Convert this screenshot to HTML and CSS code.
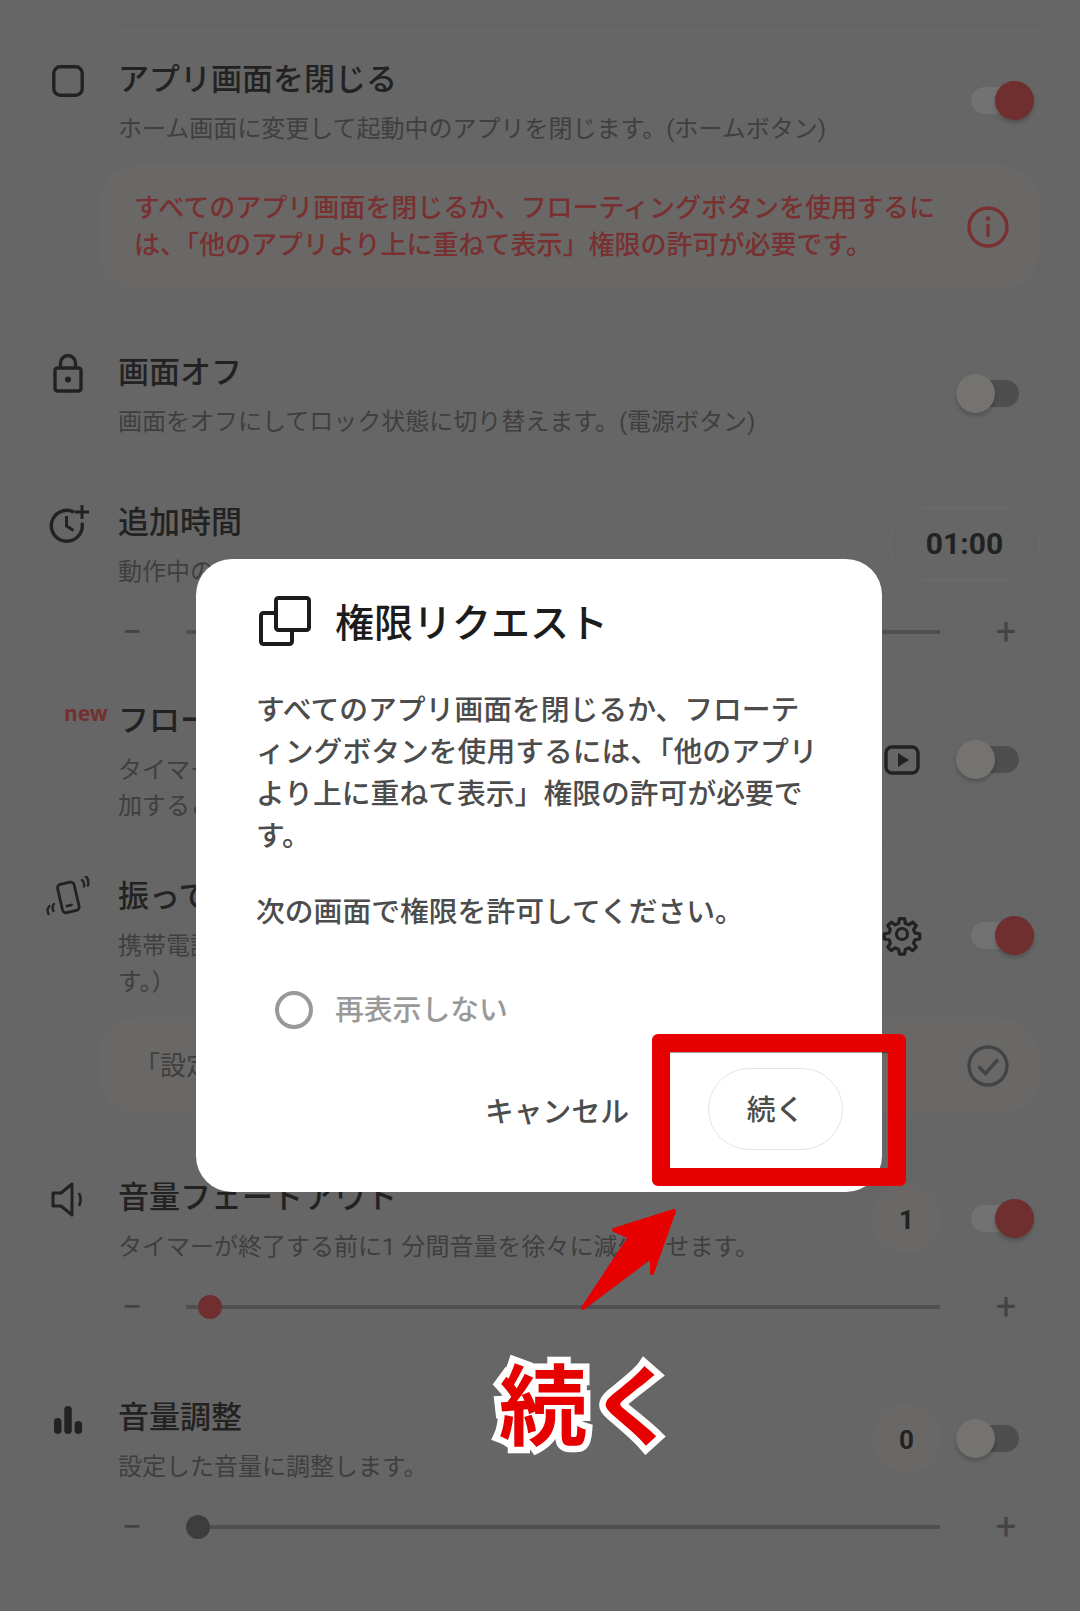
FILE: index.html
```html
<!DOCTYPE html>
<html lang="ja">
<head>
  <meta charset="UTF-8">
  <meta name="viewport" content="width=device-width, initial-scale=1.0">
  <title>権限リクエスト</title>
  <link rel="stylesheet" href="styles.css">
</head>
<body>
  <div class="page">
    <hr class="divider">

    <section class="row with-card">
      <div class="head">
        <svg class="icon" viewBox="0 0 44 44"><rect x="7.8" y="7.8" width="28.4" height="28.4" rx="6.5" fill="none" stroke="#222" stroke-width="3.4"/></svg>
        <div class="text">
          <div class="title">アプリ画面を閉じる</div>
          <div class="sub">ホーム画面に変更して起動中のアプリを閉じます。(ホームボタン)</div>
        </div>
        <div class="controls"><span class="toggle on"><i></i></span></div>
      </div>
      <div class="card red">
        <p>すべてのアプリ画面を閉じるか、フローティングボタンを使用するには、「他のアプリより上に重ねて表示」権限の許可が必要です。</p>
        <svg class="card-icon" viewBox="0 0 44 44"><circle cx="22" cy="22" r="19" fill="none" stroke="#783030" stroke-width="3.4"/><circle cx="22" cy="13.5" r="2.2" fill="#783030"/><rect x="20.4" y="19" width="3.2" height="13" fill="#783030"/></svg>
      </div>
    </section>
    <hr class="divider">

    <section class="row">
      <div class="head">
        <svg class="icon" viewBox="0 0 44 44"><rect x="9" y="16" width="26" height="23" rx="2.5" fill="none" stroke="#222" stroke-width="3.4"/><path d="M14.5 16v-5a7.5 7.5 0 0 1 15 0v5" fill="none" stroke="#222" stroke-width="3.4"/><circle cx="22" cy="27.5" r="3" fill="#222"/></svg>
        <div class="text">
          <div class="title">画面オフ</div>
          <div class="sub">画面をオフにしてロック状態に切り替えます。(電源ボタン)</div>
        </div>
        <div class="controls"><span class="toggle"><i></i></span></div>
      </div>
    </section>
    <hr class="divider">

    <section class="row no-line">
      <div class="head">
        <svg class="icon" viewBox="0 0 44 44"><path d="M27 9.6A15.5 15.5 0 1 0 36.2 22" fill="none" stroke="#222" stroke-width="3.4" stroke-linecap="round"/><path d="M20.5 14v10l7 4.5" fill="none" stroke="#222" stroke-width="3"/><path d="M36 3v14M29 10h14" fill="none" stroke="#222" stroke-width="3"/></svg>
        <div class="text">
          <div class="title">追加時間</div>
          <div class="sub">動作中のタイマーに時間を追加します。</div>
        </div>
        <div class="controls"><span class="pill">01:00</span></div>
      </div>
      <div class="slider">
        <span class="step">−</span>
        <div class="track"></div>
        <span class="step">+</span>
      </div>
    </section>

    <section class="row tight">
      <div class="head">
        <span class="new">new</span>
        <div class="icon-gap"></div>
        <div class="text">
          <div class="title">フローティングボタン</div>
          <div class="sub">タイマーが動作中にボタンで時間を追<br>加することができます。</div>
        </div>
        <div class="controls">
          <svg class="side-icon" viewBox="0 0 44 44"><rect x="6" y="9" width="32" height="26" rx="6" fill="none" stroke="#222" stroke-width="3.4"/><path d="M18 15l11 7-11 7z" fill="#222"/></svg>
          <span class="toggle"><i></i></span>
        </div>
      </div>
    </section>
    <hr class="divider">

    <section class="row with-card">
      <div class="head">
        <svg class="icon" viewBox="0 0 44 44"><g fill="none" stroke="#222" stroke-width="2.8" stroke-linecap="round"><rect x="14" y="7" width="17" height="29" rx="3.5" transform="rotate(-13 22 22)"/><path d="M21 30l4.5-1"/><path d="M36 4c2 1.500 2.500 3.500 2 6.500M39.500 0c2.500 2 3.500 5 2.500 9.500" stroke-width="2.400"/><path d="M8 28c-1.500 1.500-2 4-.5 7M3.500 30c-2 2-3 4-1 8" stroke-width="2.400"/></g></svg>
        <div class="text">
          <div class="title">振って追加</div>
          <div class="sub">携帯電話を振ると時間が追加されま<br>す。）</div>
        </div>
        <div class="controls">
          <svg class="side-icon gear" viewBox="0 0 44 44"><path d="M19 4h6l1 5.500 4 1.700 4.600-3.200 4.200 4.200-3.200 4.600 1.700 4 5.500 1v6l-5.500 1-1.700 4 3.200 4.600-4.200 4.200-4.600-3.200-4 1.700-1 5.500h-6l-1-5.500-4-1.700-4.600 3.200-4.200-4.200 3.200-4.600-1.700-4-5.500-1v-6l5.500-1 1.700-4-3.200-4.600 4.200-4.200 4.600 3.200 4-1.700z" transform="translate(3.300 3.300) scale(.85)" fill="none" stroke="#222" stroke-width="3.800" stroke-linejoin="round"/><circle cx="22" cy="22" r="5.500" fill="none" stroke="#222" stroke-width="3.200"/></svg>
          <span class="toggle on"><i></i></span>
        </div>
      </div>
      <div class="card short">
        <p>「設定」で権限が許可されています。</p>
        <svg class="card-icon" viewBox="0 0 44 44"><circle cx="22" cy="22" r="19" fill="none" stroke="#444" stroke-width="3.4"/><path d="M12.500 22.500l7 7L32 15.500" fill="none" stroke="#444" stroke-width="3.400"/></svg>
      </div>
    </section>
    <hr class="divider">

    <section class="row with-slider">
      <div class="head">
        <svg class="icon" viewBox="0 0 44 44"><path d="M7 16h8l11-9v31l-11-9H7z" fill="none" stroke="#222" stroke-width="3" stroke-linejoin="round"/><path d="M33 16c2 4 2 9 0 13" fill="none" stroke="#222" stroke-width="2.600"/></svg>
        <div class="text">
          <div class="title">音量フェードアウト</div>
          <div class="sub">タイマーが終了する前に1 分間音量を徐々に減少させます。</div>
        </div>
        <div class="controls"><span class="badge">1</span><span class="toggle on"><i></i></span></div>
      </div>
      <div class="slider">
        <span class="step">−</span>
        <div class="track"><i class="knob red-knob"></i></div>
        <span class="step">+</span>
      </div>
    </section>
    <hr class="divider">

    <section class="row with-slider">
      <div class="head">
        <svg class="icon" viewBox="0 0 44 44"><g fill="#222"><rect x="8" y="21" width="7.500" height="16" rx="3.700"/><rect x="18.300" y="9" width="7.500" height="28" rx="3.700"/><rect x="28.600" y="24" width="7.500" height="13" rx="3.700"/></g></svg>
        <div class="text">
          <div class="title">音量調整</div>
          <div class="sub">設定した音量に調整します。</div>
        </div>
        <div class="controls"><span class="badge">0</span><span class="toggle"><i></i></span></div>
      </div>
      <div class="slider">
        <span class="step">−</span>
        <div class="track"><i class="knob"></i></div>
        <span class="step">+</span>
      </div>
    </section>
    <hr class="divider">
  </div>

  <div class="dialog">
    <div class="dialog-head">
      <svg class="dialog-icon" viewBox="0 0 52 52"><path d="M17 18H4.500a2.500 2.500 0 0 0-2.500 2.500v26A2.500 2.500 0 0 0 4.500 49h26a2.500 2.500 0 0 0 2.500-2.500V35" fill="none" stroke="#1c1c1c" stroke-width="4"/><rect x="17" y="3" width="33" height="32" rx="2.500" fill="none" stroke="#1c1c1c" stroke-width="4"/></svg>
      <h2>権限リクエスト</h2>
    </div>
    <p class="dialog-text">すべてのアプリ画面を閉じるか、フローティングボタンを使用するには、「他のアプリより上に重ねて表示」権限の許可が必要です。</p>
    <p class="dialog-text next">次の画面で権限を許可してください。</p>
    <div class="check"><span class="radio"></span>再表示しない</div>
    <div class="actions">
      <span class="cancel">キャンセル</span>
      <span class="ok">続く</span>
    </div>
  </div>

  <div class="mark-box"></div>
  <svg class="mark-arrow" viewBox="0 0 120 130"><path d="M104 11L44 30L60 37L13 108L82 56L82 73Z" fill="#e60000" stroke="#e60000" stroke-width="4" stroke-linejoin="round"/></svg>
  <div class="mark-label">続く</div>
</body>
</html>
```

FILE: styles.css
```css
* { box-sizing: border-box; }
html, body { margin: 0; padding: 0; }
body { width: 1080px; height: 1611px; background: #666; color: #222; font-family: Roboto, "Noto Sans CJK JP", sans-serif; overflow: hidden; position: relative; }

.page { padding-top: 24px; }
.divider { margin: 0 40px 0 118px; border: none; height: 1px; background: #626262; }

.row { padding: 35px 40px 27px 46px; }
.row.with-card { padding-bottom: 28px; }
.row.no-line { padding-bottom: 0; }
.row.tight { padding: 0 40px 17px 46px; margin-top: 57px; }
.row.with-slider { padding-bottom: 43px; }
.head { display: flex; align-items: center; position: relative; }
.icon { width: 44px; height: 44px; flex: none; align-self: flex-start; margin: -1px 28px 0 0; }
.icon-gap { width: 72px; flex: none; }
.text { flex: 1; min-width: 0; }
.title { font-size: 31px; line-height: 40px; font-weight: 500; color: #222; }
.sub { font-size: 24px; line-height: 36px; margin-top: 11px; color: #3f3f3f; }
.new { position: absolute; left: 18px; top: -1px; font: 700 21px/26px "Noto Sans", sans-serif; color: #743030; }

.controls { display: flex; align-items: center; flex: none; margin-bottom: 6px; }
.toggle { display: block; position: relative; width: 78px; height: 39px; margin: 0 6px 0 15px; }
.toggle::before { content: ""; position: absolute; left: 15px; right: 15px; top: 6px; height: 27px; border-radius: 14px; background: #4e4e4e; }
.toggle i { position: absolute; left: 0; top: 0; width: 39px; height: 39px; border-radius: 50%; background: #74736f; box-shadow: 0 3px 4px rgba(0,0,0,.2); }
.toggle.on::before { background: #727272; }
.toggle.on i { left: auto; right: 0; background: #702f2f; }

.pill { display: block; width: 151px; height: 74px; line-height: 72px; text-align: center; border: 1px solid #6d6c6b; border-radius: 37px; font-size: 30px; font-weight: 700; color: #222; }
.badge { display: block; width: 69px; height: 69px; line-height: 72px; text-align: center; border-radius: 50%; background: #6a6866; font-size: 26px; font-weight: 700; color: #222; }
.side-icon { width: 44px; height: 44px; margin-right: 17px; }
.side-icon.gear { margin-top: -4px; }

.card { display: flex; align-items: center; margin: 18px 0 0 52px; height: 124px; padding: 0 30px 0 36px; border-radius: 40px; background: #6a6866; }
.card.short { height: 96px; }
.card p { flex: 1; margin: 0; font-size: 26px; line-height: 37px; color: #3f3f3f; }
.card.red p { color: #783030; font-weight: 500; }
.card-icon { width: 44px; height: 44px; flex: none; margin-left: 28px; }

.slider { display: flex; align-items: center; height: 24px; margin: 30px 0 0 72px; }
.step { width: 28px; flex: none; margin-right: 40px; text-align: center; font-size: 36px; line-height: 24px; color: #444; }
.step:last-child { margin: 0 20px 0 52px; }
.track { flex: 1; height: 4px; background: #4f4f4f; position: relative; }
.knob { position: absolute; left: 0; top: -10px; width: 24px; height: 24px; border-radius: 50%; background: #3d3d3d; }
.knob.red-knob { left: 12px; background: #702f2f; }

/* dialog on top of the dimmed list */
.dialog { position: absolute; left: 196px; top: 559px; width: 686px; height: 633px; padding: 34px 39px 0 60px; background: #fff; border-radius: 36px; }
.dialog-head { display: flex; align-items: center; gap: 24px; margin-left: 3px; }
.dialog-icon { width: 52px; height: 52px; flex: none; }
.dialog-head h2 { margin: 0; padding-top: 6px; font-size: 39px; line-height: 50px; font-weight: 500; color: #1c1c1c; }
.dialog-text { max-width: 568px; margin: 40px 0 0; font-size: 28.8px; line-height: 42px; font-weight: 500; color: #4c4c4c; line-break: anywhere; }
.dialog-text.next { margin-top: 34px; }
.check { display: flex; align-items: center; gap: 22px; margin: 58px 0 0 19px; font-size: 28.8px; line-height: 38px; font-weight: 500; color: #999; }
.radio { width: 38px; height: 38px; border: 4px solid #999; border-radius: 50%; }
.actions { display: flex; align-items: center; justify-content: flex-end; margin-top: 39px; font-size: 28.8px; font-weight: 500; color: #4c4c4c; }
.cancel { margin-right: 79px; }
.ok { width: 135px; height: 82px; line-height: 82px; text-align: center; border: 1px solid #e4e4e4; border-radius: 41px; }

/* red annotations */
.mark-box { position: absolute; left: 652px; top: 1034px; width: 254px; height: 152px; border: 18px solid #e60000; border-radius: 6px; box-shadow: inset 0 1px 1px rgba(0,0,0,.4); }
.mark-arrow { position: absolute; left: 570px; top: 1200px; width: 120px; height: 130px; }
.mark-label { position: absolute; left: 499px; top: 1343px; font-size: 88px; line-height: 130px; letter-spacing: 3px; font-weight: 700; color: #e60000; -webkit-text-stroke: 13px #fff; paint-order: stroke fill; }
```
